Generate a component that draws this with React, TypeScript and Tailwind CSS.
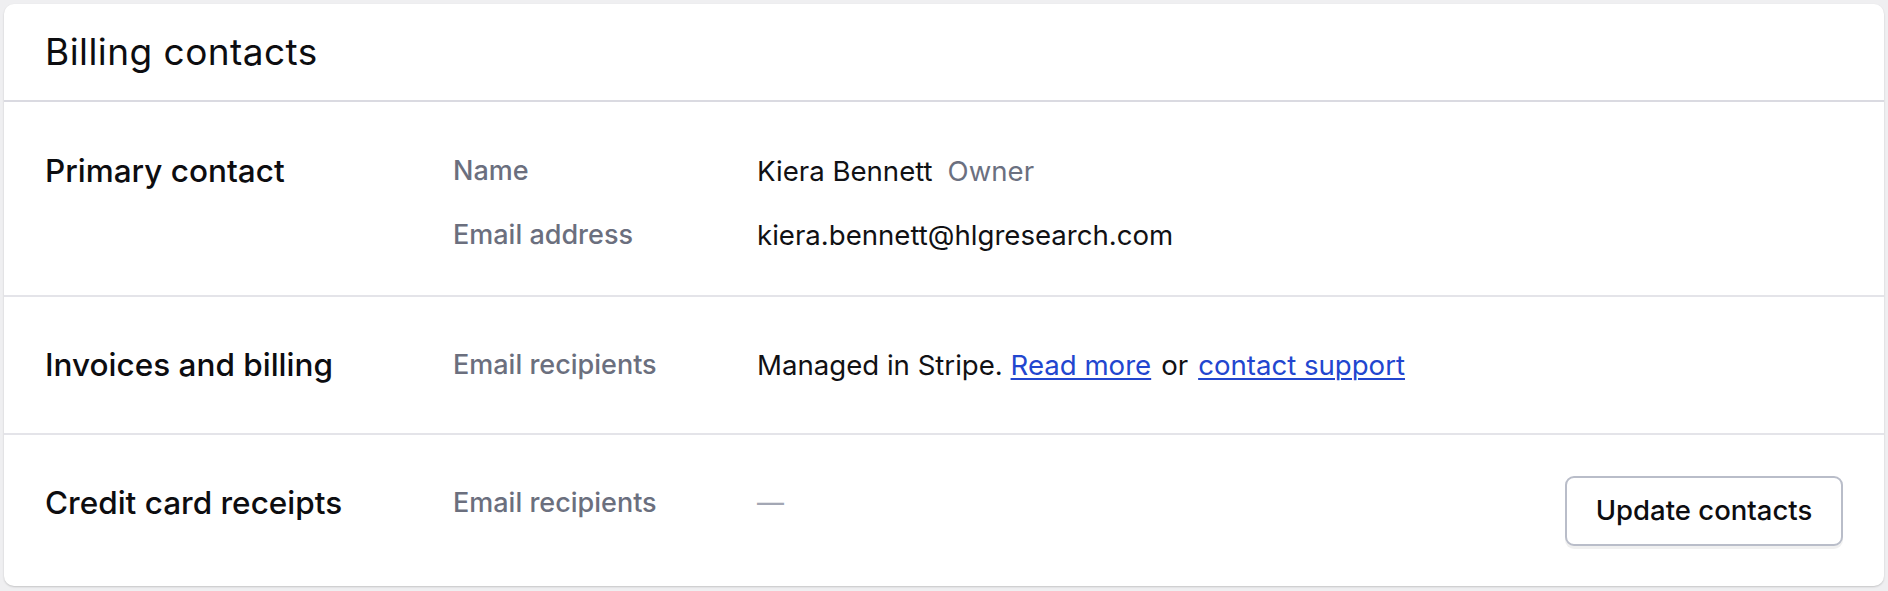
import React from "react";

const FONT = { fontFamily: "Inter, 'Noto Sans', sans-serif" };

function FieldLabel({ children }: { children: React.ReactNode }) {
  return (
    <div className="text-[27px] leading-[40px] font-medium text-[#6b6f7e]">
      {children}
    </div>
  );
}

function Value({ children }: { children: React.ReactNode }) {
  return (
    <div className="text-[27.6px] leading-[40px] text-[#111114]">{children}</div>
  );
}

function SectionLabel({ children }: { children: React.ReactNode }) {
  return (
    <div className="w-[408px] shrink-0 text-[31.5px] leading-[40px] font-medium text-[#0d0d10]">
      {children}
    </div>
  );
}

export default function App() {
  return (
    <div
      className="min-h-[591px] bg-[#efeff1] px-[4px] pt-[4px] pb-[6px]"
      style={FONT}
    >
      <div className="overflow-hidden rounded-[10px] bg-white shadow-[0_1px_2px_rgba(0,0,0,0.18)]">
        {/* header */}
        <div className="border-b-2 border-[#dadae1] px-[41px] pt-[26px] pb-[26px]">
          <h1 className="text-[37px] leading-[44px] font-normal tracking-[0.012em] text-[#0d0d10]">
            Billing contacts
          </h1>
        </div>

        {/* primary contact */}
        <div className="flex items-start border-b-2 border-[#e4e4e9] px-[41px] pt-[49px] pb-[40px]">
          <SectionLabel>Primary contact</SectionLabel>
          <div className="flex w-[304px] shrink-0 flex-col gap-[24px]">
            <FieldLabel>Name</FieldLabel>
            <FieldLabel>Email address</FieldLabel>
          </div>
          <div className="flex flex-1 flex-col gap-[24px]">
            <Value>
              Kiera Bennett
              <span className="ml-[15px] text-[#6b7080]">Owner</span>
            </Value>
            <Value>kiera.bennett@hlgresearch.com</Value>
          </div>
        </div>

        {/* invoices */}
        <div className="flex items-start border-b-2 border-[#e4e4e9] px-[41px] pt-[48px] pb-[48px]">
          <SectionLabel>Invoices and billing</SectionLabel>
          <div className="w-[304px] shrink-0">
            <FieldLabel>Email recipients</FieldLabel>
          </div>
          <div className="flex-1">
            <Value>
              Managed in Stripe.{" "}
              <a
                href="#"
                className="text-[#2246cf] underline decoration-[2px] underline-offset-[3px]"
              >
                Read more
              </a>
              <span className="mx-[10px]">or</span>
              <a
                href="#"
                className="text-[#2246cf] underline decoration-[2px] underline-offset-[3px]"
              >
                contact support
              </a>
            </Value>
          </div>
        </div>

        {/* credit card receipts */}
        <div className="flex items-start px-[41px] pt-[41px] pb-[40px]">
          <div className="flex flex-1 items-start pt-[7px]">
            <SectionLabel>Credit card receipts</SectionLabel>
            <div className="w-[304px] shrink-0">
              <FieldLabel>Email recipients</FieldLabel>
            </div>
            <div className="flex-1 text-[27px] leading-[40px] text-[#a3a7b4]">
              —
            </div>
          </div>
          <button
            type="button"
            className="h-[70px] w-[278px] rounded-[9px] border-2 border-[#b9bdc9] bg-white text-[27.5px] font-medium text-[#0d0d10] shadow-[0_3px_0_rgba(0,0,0,0.06)]"
          >
            Update contacts
          </button>
        </div>
      </div>
    </div>
  );
}
